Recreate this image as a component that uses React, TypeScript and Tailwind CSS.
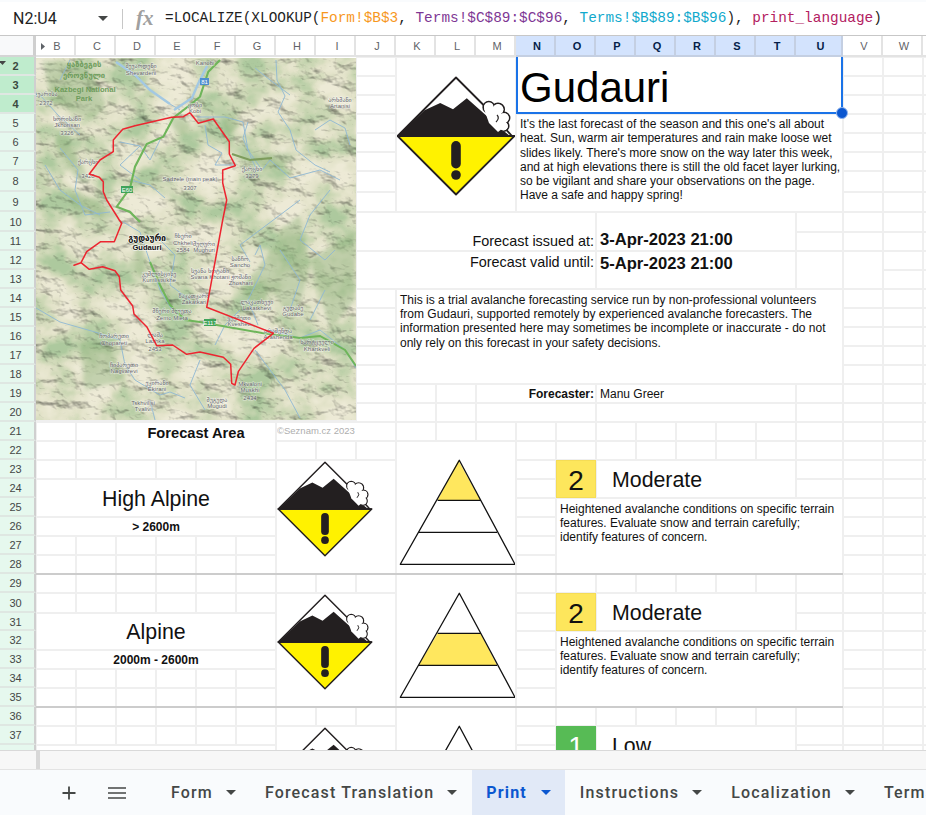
import React from "react";

const COLS = ["B","C","D","E","F","G","H","I","J","K","L","M","N","O","P","Q","R","S","T","U","V","W",""];
const ROWS = Array.from({ length: 37 }, (_, i) => i + 2);
const cell = "bg-white border border-[#efefef] min-w-0 min-h-0 overflow-hidden relative";

function Warning({ size }: { size: number }) {
  return (
    <svg width={size} height={size} viewBox="-60 -60 120 120" className="block shrink-0">
      <path d="M-58.5 0 L0 58.5 L58.5 0 Z" fill="#fff200" stroke="#231f20" strokeWidth="1.8" strokeLinejoin="round" />
      <path d="M-58.5 0 L0 -58.5 L30 -28.5 L56 0 Z" fill="#fff" stroke="#231f20" strokeWidth="1.8" strokeLinejoin="round" />
      <path d="M-58.5 0 L-31.5 -25.7 L-15.8 -33 L-3 -26.7 L10.8 -37.7 L46.8 -5.7 L54 0 Z" fill="#231f20" />
      <g fill="#fff" stroke="#231f20" strokeWidth="1.7">
        <circle cx="32.8" cy="-28.8" r="5.6" />
        <circle cx="42" cy="-26.5" r="6.2" />
        <circle cx="48" cy="-18" r="5.6" />
        <circle cx="47.5" cy="-10" r="5.2" />
      </g>
      <path d="M28 -27 L41 -27 L48 -18 L47 -8 L42 -4 L33 -13 Z" fill="#fff" />
      <g fill="#fff" stroke="none">
        <circle cx="32.8" cy="-28.8" r="4.8" />
        <circle cx="42" cy="-26.5" r="5.4" />
        <circle cx="48" cy="-18" r="4.8" />
        <circle cx="47.5" cy="-10" r="4.4" />
      </g>
      <path d="M41 -21 Q44 -18 40 -14" fill="none" stroke="#231f20" strokeWidth="1.2" />
      <path d="M-58.5 0 L58.5 0" stroke="#231f20" strokeWidth="1.8" />
      <rect x="-4.8" y="5" width="9.6" height="27.5" rx="4.8" fill="#231f20" />
      <circle cx="0" cy="39" r="4.8" fill="#231f20" />
    </svg>
  );
}

function Pyramid({ band }: { band: number }) {
  const bands = [
    "M59.3 1.3 L38.7 41.3 L81.3 41.3 Z",
    "M38.7 41.3 L19.7 73.3 L98 73.3 L81.3 41.3 Z",
    "M19.7 73.3 L1.3 105.3 L116 105.3 L98 73.3 Z",
  ];
  return (
    <svg width="118" height="107" viewBox="0 0 118 107" className="block">
      <path d={bands[band]} fill="#ffe75e" />
      <path d="M60.3 1.3 L1.3 105.3 L116 105.3 Z M38.7 41.3 L81.3 41.3 M19.7 73.3 L98 73.3" fill="none" stroke="#111" strokeWidth="1.3" strokeLinejoin="round" />
    </svg>
  );
}

const route = "190,112.7 198.3,123.3 213.3,119 229.3,141.7 229.3,154 235.3,165.7 222.7,170 222.7,183 226.7,200 222.7,220 206.7,307.3 273.3,333.3 254,348.3 238.3,371.7 235,385 231.7,383.3 230.7,364.3 223.3,357.3 200,352 186.7,354.3 172.7,345 156.7,345.7 146.7,326.7 134,314 132.7,306 120.7,290 119.3,276.7 115,270.7 102.7,266.7 89.3,269.3 81,262.7 74,265.3 81,262.7 86.7,251.7 100.7,241.7 114.3,241.7 121.7,223.3 119.3,220 106.7,200 103.3,191.7 103.3,181.7 99.3,177.3 89.3,174 100,160 113.3,151.7 113.3,140 122.7,129.3 135,125.7 171.7,117.3 183.3,116.7 190,112.7";

const rivers = [
  "M116 62 L135 75 L150 90 L170 104 L180 110",
  "M207 66 L198 84 L192 98 L174 110",
  "M276 60 L277 80 L285 96 L278 112 L290 130 L296 150 L315 165 L330 172",
  "M197 117 L225 117 L243 122 L248 150 L262 170 L270 160 L290 178 L320 170 L340 180",
  "M248 122 L243 138 L252 160 L258 172",
  "M205 125 L208 145 L222 153 L215 165 L235 165",
  "M120 142 L140 146 L150 160 L160 140 M140 146 L120 165 L140 180",
  "M130 180 L150 185 L165 198",
  "M60 148 L78 170 L75 190 L85 215 L110 212",
  "M45 165 L60 190 L80 205 L100 215",
  "M330 190 L310 215 L300 240 L325 260 L335 250",
  "M300 200 L280 215 L260 230 L240 245 L250 262",
  "M290 95 L270 80 L255 68",
  "M315 130 L330 120 L345 128 L350 145",
  "M123 222 L140 232 L150 262 L160 290 L172 310",
  "M255 255 L260 245 L265 265 L248 300 L258 325",
  "M36 308 L60 322 L95 332 L120 340 L125 365 L135 380 L160 395 L170 392 L185 398",
  "M150 400 L155 420",
  "M270 330 L300 338 L320 330 L345 350 L356 368",
  "M60 80 L70 60 M40 95 L58 115 L80 135",
  "M160 240 L175 255 L170 285 L190 300",
  "M280 250 L300 280 L290 310 M325 290 L310 320",
  "M240 310 L225 325 L215 345",
  "M200 360 L190 385 L205 410",
  "M255 350 L285 390 L300 418",
];

const forest = [
  "M42 62 C70 58 100 70 105 105 C90 130 75 110 60 105 C45 100 50 80 42 62 Z",
  "M60 130 C75 145 80 165 90 180 C80 190 70 170 65 160 C55 150 55 140 60 130 Z",
  "M70 190 C85 195 105 205 120 215 C110 225 85 215 72 205 Z",
  "M170 118 C180 112 192 120 190 130 C182 140 170 130 170 118 Z",
  "M225 115 C235 115 250 118 230 135 C220 130 225 122 225 115 Z",
  "M135 240 C145 245 150 270 140 280 C132 265 135 255 135 240 Z",
  "M152 270 C165 275 175 290 170 300 C158 298 150 285 152 270 Z",
  "M250 155 L290 152 L295 160 L265 170 Z",
  "M280 230 L300 215 L310 270 L295 320 L270 290 Z",
  "M80 340 L110 345 L125 380 L85 390 Z",
  "M240 290 L280 240 L290 250 L260 310 Z",
  "M310 260 L355 230 L355 300 L330 330 Z",
];

type Label = [number, number, string];
const labels: Label[] = [
  [141, 68, "შევარდენი"], [141, 75, "Shevardeni"], [205, 65, "Kanobi"], [195, 107, "ყობი"], [195, 113, "Kobi"],
  [46, 96, "ჯვარისა"], [46, 105, "2372"], [67, 121, "ხორისანი"], [67, 127, "Jkhorisan"], [67, 135, "3326"], [88, 164, "ქარცხი"], [88, 178, "3428"],
  [340, 102, "არხმანი"], [340, 108, "Artanisi"], [252, 171, "ქარცხი"], [252, 178, "3279"], [190, 181, "Sadzele (main peak)"], [190, 190, "3307"],
  [183, 238, "ჩხერი"], [183, 245, "Chkheli"], [183, 252, "2584"], [204, 246, "მუღური"], [204, 252, "Mughuri"],
  [240, 261, "სანჩო"], [240, 267, "Sancho"], [210, 273, "სვანა ხოტანი"], [210, 279, "Svana Khotani"], [241, 279, "ჟოშანი"], [241, 285, "Zhoshani"],
  [159, 276, "კუმლისციხე"], [159, 282, "Kumlistsikhe"], [194, 298, "ზაკათკარი"], [194, 304, "Zakatkari"], [257, 304, "ლაკათხევი"], [257, 310, "Lakatkhevi"], [293, 310, "გუდაბე"], [293, 316, "Gudabe"],
  [172, 313, "მწერი მლეთა"], [172, 320, "Zemo Mleta"], [239, 320, "ყვეშეთი"], [239, 326, "Kvesheti"], [278, 333, "არაშენდა"], [278, 339, "Arashenda"], [317, 344, "ხარტყველი"], [317, 351, "Khartkveli"],
  [155, 337, "ლაშა"], [155, 343, "Lazhka"], [155, 351, "2453"], [114, 338, "ჩოპარეთი"], [114, 345, "Chopareti"], [124, 367, "ჩიპარეთი"], [124, 373, "Nagvarevi"],
  [157, 385, "ეკირანი"], [157, 391, "Ekirani"], [143, 405, "Tskhvilisi"], [143, 411, "Tvalivi"], [217, 402, "მუგუდა"], [217, 408, "Mugudi"], [250, 386, "Mkvaloni"], [250, 392, "Muskhi"], [250, 400, "2434"],
];

function MapView() {
  const shift = "translate(-36 -58)";
  return (
    <svg width="320" height="362" viewBox="0 0 320 362" className="block">
      <defs>
        <filter id="terrain" x="0" y="0" width="100%" height="100%" colorInterpolationFilters="sRGB">
          <feTurbulence type="fractalNoise" baseFrequency="0.04 0.055" numOctaves="5" seed="11" result="n" />
          <feDiffuseLighting in="n" surfaceScale="3.6" diffuseConstant="1.18" lightingColor="#ffffff" result="light">
            <feDistantLight azimuth="300" elevation="62" />
          </feDiffuseLighting>
          <feTurbulence type="fractalNoise" baseFrequency="0.025 0.03" numOctaves="4" seed="4" result="c" />
          <feColorMatrix in="c" type="matrix" values="2.2 0 0 0 -0.55  2.2 0 0 0 -0.55  2.2 0 0 0 -0.55  0 0 0 0 1" />
          <feComponentTransfer result="color">
            <feFuncR type="table" tableValues="0.68 0.79 0.89 0.93" />
            <feFuncG type="table" tableValues="0.79 0.84 0.89 0.92" />
            <feFuncB type="table" tableValues="0.62 0.7 0.79 0.84" />
          </feComponentTransfer>
          <feBlend in="light" in2="color" mode="multiply" />
          <feGaussianBlur stdDeviation="0.35" />
        </filter>
        <filter id="soft"><feGaussianBlur stdDeviation="2" /></filter>
      </defs>
      <rect width="320" height="362" fill="#cfd3b8" filter="url(#terrain)" />
      <g transform={shift}>
        <g filter="url(#soft)" fill="#86ad74" opacity="0.4">
          {forest.map((d, i) => <path key={i} d={d} />)}
        </g>
        <g fill="none" stroke="#8fb8d4" strokeWidth="0.9" strokeLinejoin="round">
          {rivers.map((d, i) => <path key={i} d={d} />)}
        </g>
        <path d="M116 62 L135 75 L150 90 L170 104 M207 66 L198 84 L192 98 L174 110" fill="none" stroke="#a3c8e2" strokeWidth="2.4" />
        <path d="M150 262 L160 285 L170 305 L185 320 L200 322 L262 333 L300 338 L320 336 L345 350 L356 366" fill="none" stroke="#6eb55a" strokeWidth="2" />
        <path d="M220 60 L208.3 71.7 L200 96.7 L190 105 L173.3 118 L163.3 136.7 L146.7 144 L135 166.7 L130 188 L116.7 206.7 L130 212 L140 222" fill="none" stroke="#6eb55a" strokeWidth="2.1" />
        <path d="M232 154 L250 160 L272 158" fill="none" stroke="#7d9c5c" strokeWidth="2.2" />
        <rect x="200" y="78" width="9" height="7" fill="#4f8fd0" />
        <text x="204.5" y="84" fontSize="6" textAnchor="middle" fill="#fff" fontFamily="Liberation Sans">81</text>
        <rect x="121" y="186" width="12" height="7" fill="#3fa35a" />
        <text x="127" y="192" fontSize="6" textAnchor="middle" fill="#fff" fontFamily="Liberation Sans">E60</text>
        <rect x="204" y="319" width="12" height="7" fill="#3fa35a" />
        <text x="210" y="325" fontSize="6" textAnchor="middle" fill="#fff" fontFamily="Liberation Sans">E117</text>
        <g fontFamily="Liberation Sans, DejaVu Sans" fontSize="6" textAnchor="middle" fill="#66666a" stroke="#ffffff" strokeOpacity="0.5" strokeWidth="1.2" paintOrder="stroke">
          {labels.map(([x, y, t], i) => <text key={i} x={x} y={y}>{t}</text>)}
        </g>
        <g fontFamily="Liberation Sans, DejaVu Sans" fontSize="7.6" fontWeight="700" textAnchor="middle" fill="#6e9c5c">
          <text x="84" y="67">ყაზბეგის</text>
          <text x="84" y="78">ეროვნული</text>
          <text x="85" y="92">Kazbegi National</text>
          <text x="84" y="101">Park</text>
        </g>
        <g fontFamily="Liberation Sans, DejaVu Sans" fontWeight="700" textAnchor="middle" fill="#111" stroke="#fff" strokeOpacity="0.7" strokeWidth="1.6" paintOrder="stroke">
          <text x="147" y="241" fontSize="8.2">გუდაური</text>
          <text x="147" y="250" fontSize="7.6">Gudauri</text>
        </g>
        <polyline points={route} fill="none" stroke="#ec2530" strokeWidth="1.5" strokeLinejoin="round" />
      </g>
    </svg>
  );
}

function Caret({ className }: { className: string }) {
  return (
    <svg width="10" height="5" viewBox="0 0 10 5" className={className}>
      <path d="M0 0 L10 0 L5 5 Z" fill="currentColor" />
    </svg>
  );
}

function Section({ children }: { children: React.ReactNode }) {
  return <>{children}</>;
}

function Tab({ name, active }: { name: string; active?: boolean }) {
  return (
    <div className={active
      ? "flex h-full items-center gap-[14px] px-[14px] shrink-0 bg-[#e1e9f7] text-[#0b57d0] font-bold"
      : "flex h-full items-center gap-[13px] px-[14px] shrink-0 text-[#444746] font-medium"}>
      <span>{name}</span>
      <Caret className="shrink-0" />
    </div>
  );
}

export default function App() {
  return (
    <div className="w-[926px] h-[815px] overflow-hidden flex flex-col bg-white font-['Liberation_Sans',Arial,sans-serif] text-black">
      {/* formula bar */}
      <div className="h-[36px] shrink-0 flex items-center bg-white border-b border-[#c7c7c7] border-t-2 border-t-[#f9fbfd]">
        <div className="w-[123px] shrink-0 flex items-center pl-[13px] pr-[14px] justify-between h-[20px] border-r border-[#c7c7c7] font-['Roboto',sans-serif] text-[16px] text-[#1f1f1f]">
          <span>N2:U4</span>
          <Caret className="text-[#444746]" />
        </div>
        <span className="ml-[13px] w-[29px] shrink-0 font-['Liberation_Serif',serif] italic font-bold text-[21px] text-[#a0a0a0]">fx</span>
        <div className="whitespace-pre font-['Liberation_Mono',monospace] text-[14.4px] text-[#1f1f1f]">
          <span>=LOCALIZE(XLOOKUP(</span>
          <span className="text-[#f7981d]">Form!$B$3</span>
          <span>, </span>
          <span className="text-[#7e3794]">Terms!$C$89:$C$96</span>
          <span>, </span>
          <span className="text-[#11a9cc]">Terms!$B$89:$B$96</span>
          <span>), </span>
          <span className="text-[#b3205f]">print_language</span>
          <span>)</span>
        </div>
      </div>

      {/* sheet */}
      <div className="h-[714px] shrink-0 overflow-hidden">
        <div className="grid w-max grid-cols-[36px_repeat(19,40px)_47px_repeat(3,40px)] grid-rows-[21px_repeat(6,19px)_21px_20px_20px_repeat(19,19px)_20px_18px_repeat(7,19px)]">
          <div className="col-[1] row-[1] bg-[#f8f9fa] border-r-[4px] border-r-[#cfcfcf] border-b-2 border-b-[#d5d5d5] -mr-px" />
          {COLS.map((c, i) => {
            const sel = i >= 12 && i <= 19;
            return (
              <div key={c + i} style={{ gridColumn: i + 2, gridRow: 1 }}
                className={(sel
                  ? "bg-[#d3e3fd] text-[#041e49] font-bold border-[#c4cfe2] "
                  : "bg-white text-[#5f6368] border-[#e3e3e3] ") + "relative flex items-center justify-center pl-[4px] pt-[2px] text-[11px] border-r-2 border-b-2"}>
                {c}
                {i === 0 && <svg width="4" height="7" viewBox="0 0 4 7" className="absolute left-[5px] top-[7px]"><path d="M0 0 L4 3.5 L0 7 Z" fill="#5f6368" /></svg>}
              </div>
            );
          })}
          {ROWS.map((r) => {
            const sel = r <= 4;
            return (
              <div key={r} style={{ gridColumn: 1, gridRow: r }}
                className={(sel ? "bg-[#bfeccd] font-bold text-[#3c4a40] " : "bg-[#e6f8ee] text-[#444746] ") + "relative flex items-center justify-center pr-[3px] pt-[2px] text-[11px] border-b-2 border-b-[#dfe7e2] border-r-2 border-r-[#cfcfcf]"}>
                {r < 38 ? r : ""}
                {r === 2 && <svg width="7" height="4" viewBox="0 0 7 4" className="absolute left-[-1px] top-[4px]"><path d="M0 0 L7 0 L3.5 4 Z" fill="#444746" /></svg>}
              </div>
            );
          })}
          {ROWS.map((r) => COLS.map((c, i) => (
            <div key={i + "-" + r} style={{ gridColumn: i + 2, gridRow: r }} className="border border-[#efefef] bg-white" />
          )))}

          {/* map */}
          <div className="col-[2/10] row-[2/21] bg-white overflow-hidden pt-px border-b-2 border-b-[#efefef]">
            <MapView />
          </div>

          {/* logo */}
          <div className={cell + " col-[11/14] row-[2/10] flex justify-center pt-[18px]"}>
            <Warning size={120} />
          </div>

          {/* title */}
          <div className="col-[14/22] row-[2/5] bg-white border-x-2 border-b-2 border-[#1a73e8] relative z-10 flex items-end pl-[2px] pb-[1px]">
            <span className="text-[42px] leading-[46px] text-black">Gudauri</span>
            <span className="absolute -right-[7px] -bottom-[7px] w-[12px] h-[12px] rounded-full bg-[#0b57d0] border border-[#8fb4ee]" />
          </div>
          <div className={cell + " col-[14/22] row-[5/10] pl-[3px] pr-0 pt-[2px] text-[12px] leading-[14.3px] text-[#111]"}>
            It's the last forecast of the season and this one's all about heat. Sun, warm air temperatures and rain make loose wet slides likely. There's more snow on the way later this week, and at high elevations there is still the old facet layer lurking, so be vigilant and share your observations on the page. Have a safe and happy spring!
          </div>

          {/* dates */}
          <div className={cell + " col-[10/16] row-[10/12] flex items-end justify-end pr-px pb-[1px] text-[14.4px] leading-[16px] text-[#111]"}>Forecast issued at:</div>
          <div className={cell + " col-[10/16] row-[12/14] flex items-start justify-end pr-px text-[14.4px] text-[#111]"}>Forecast valid until:</div>
          <div className={cell + " col-[16/21] row-[10/12] flex items-end pl-[3px] pb-[1px] text-[16.6px] leading-[18px] font-bold text-[#111]"}>3-Apr-2023 21:00</div>
          <div className={cell + " col-[16/21] row-[12/14] flex items-start pl-[3px] text-[16.6px] font-bold text-[#111]"}>5-Apr-2023 21:00</div>
          <div className={cell + " col-[21] row-[12/14]"} />
          <div className={cell + " col-[22] row-[12/14]"} />

          {/* disclaimer */}
          <div className={cell + " col-[11/22] row-[14/19] px-[3px] pt-[3px] text-[12px] leading-[14.2px] text-[#111]"}>
            This is a trial avalanche forecasting service run by non-professional volunteers from Gudauri, supported remotely by experienced avalanche forecasters. The information presented here may sometimes be incomplete or inaccurate - do not only rely on this forecast in your safety decisions.
          </div>

          {/* forecaster */}
          <div className={cell + " col-[13/16] row-[19] flex items-center justify-end pr-px text-[12px] font-bold text-[#111]"}>Forecaster:</div>
          <div className={cell + " col-[16/21] row-[19] flex items-center pl-[3px] text-[12px] text-[#111]"}>Manu Greer</div>
          <div className={cell + " col-[13/16] row-[20]"} />
          <div className={cell + " col-[16/21] row-[20]"} />

          {/* forecast area */}
          <div className={cell + " col-[4/8] row-[21/23] flex justify-center pt-px text-[14.67px] leading-[19px] font-bold text-[#111]"}>Forecast Area</div>
          <div className={cell + " col-[8/11] row-[21] flex items-center text-[9.5px] text-[#aeaeae]"}>©Seznam.cz 2023</div>

          <Section>
            <div className={cell + " col-[2/8] row-[24/26] flex items-center justify-center pt-[3px] text-[21.33px] text-[#111]"}>High Alpine</div>
            <div className={cell + " col-[2/8] row-[26] flex items-center justify-center text-[12px] font-bold text-[#111]"}>&gt; 2600m</div>
            <div className={cell + " col-[8/11] row-[23/29]"}><Warning size={96} /></div>
            <div className={cell + " col-[11/14] row-[22/29] pt-[17px] pl-[2px]"}><Pyramid band={0} /></div>
            <div className={cell + " col-[15] row-[23/25] !bg-[#fde65c] !border-[#f5dc55] flex items-center justify-center pt-[4px] text-[28px] text-[#111]"}>2</div>
            <div className={cell + " col-[16/21] row-[23/25] flex items-center pl-[15px] pt-[3px] text-[21.33px] text-[#111]"}>Moderate</div>
            <div className={cell + " col-[15/22] row-[25/29] px-[3px] pt-[3px] text-[12px] leading-[14.2px] text-[#111]"}>
              Heightened avalanche conditions on specific terrain features. Evaluate snow and terrain carefully; identify features of concern.
            </div>
            <div className="col-[2/22] row-[29] self-start h-[2px] -mt-px bg-[#cccccc] z-10" />
          </Section>

          <Section>
            <div className={cell + " col-[2/8] row-[31/33] flex items-center justify-center pt-[2px] text-[21.33px] text-[#111]"}>Alpine</div>
            <div className={cell + " col-[2/8] row-[33] flex items-center justify-center text-[12px] font-bold text-[#111]"}>2000m - 2600m</div>
            <div className={cell + " col-[8/11] row-[30/36]"}><Warning size={96} /></div>
            <div className={cell + " col-[11/14] row-[29/36] pt-[17px] pl-[2px]"}><Pyramid band={1} /></div>
            <div className={cell + " col-[15] row-[30/32] !bg-[#fde65c] !border-[#f5dc55] flex items-center justify-center pt-[4px] text-[28px] text-[#111]"}>2</div>
            <div className={cell + " col-[16/21] row-[30/32] flex items-center pl-[15px] pt-[3px] text-[21.33px] text-[#111]"}>Moderate</div>
            <div className={cell + " col-[15/22] row-[32/36] px-[3px] pt-[3px] text-[12px] leading-[14.2px] text-[#111]"}>
              Heightened avalanche conditions on specific terrain features. Evaluate snow and terrain carefully; identify features of concern.
            </div>
            <div className="col-[2/22] row-[36] self-start h-[2px] -mt-px bg-[#cccccc] z-10" />
          </Section>

          <Section>
            <div className={cell + " col-[2/8] row-[38]"} />
            <div className={cell + " col-[8/11] row-[37/39]"}><Warning size={96} /></div>
            <div className={cell + " col-[11/14] row-[36/39] pt-[17px] pl-[2px]"}><Pyramid band={2} /></div>
            <div className={cell + " col-[15] row-[37/39] !bg-[#57bb55] !border-[#57bb55] flex items-center justify-center pt-[4px] text-[28px] text-white"}>1</div>
            <div className={cell + " col-[16/21] row-[37/39] flex items-center pl-[15px] pt-[4px] text-[21.33px] text-[#111]"}>Low</div>
          </Section>
        </div>
      </div>

      {/* horizontal scroll area */}
      <div className="h-[20px] shrink-0 bg-[#f7f7f7] border-t border-[#d9d9d9] border-b border-b-[#e3e3e3] pl-[36px]">
        <div className="w-[4px] h-full bg-[#d8d8d8]" />
      </div>

      {/* tabs */}
      <div className="flex-1 min-h-0 flex items-center bg-[#f9fbfd] font-['Roboto',sans-serif] text-[16px] tracking-[1.15px] whitespace-nowrap">
        <div className="w-[157px] shrink-0 flex items-center pl-[62px] gap-[32px] text-[#444746]">
          <svg width="14" height="14" viewBox="0 0 14 14"><path d="M7 0.5 V13.5 M0.5 7 H13.5" stroke="currentColor" strokeWidth="1.8" /></svg>
          <svg width="18" height="12" viewBox="0 0 18 12"><path d="M0 1 H18 M0 6 H18 M0 11 H18" stroke="currentColor" strokeWidth="1.6" /></svg>
        </div>
        <div className="flex h-full items-center gap-[1px]">
          <Tab name="Form" />
          <Tab name="Forecast Translation" />
          <Tab name="Print" active />
          <Tab name="Instructions" />
          <Tab name="Localization" />
          <Tab name="Terms" />
        </div>
      </div>
    </div>
  );
}
